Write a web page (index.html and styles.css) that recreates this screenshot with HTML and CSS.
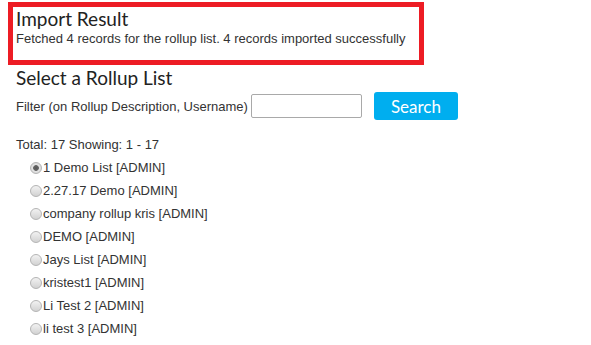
FILE: index.html
```html
<!DOCTYPE html>
<html lang="en">
<head>
    <meta charset="UTF-8">
    <meta name="viewport" content="width=device-width, initial-scale=1.0">
    <title>Select a Rollup List</title>
    <link rel="stylesheet" href="styles.css">
</head>
<body>
    <div class="page">
        <div class="result-box">
            <h2 class="title">Import Result</h2>
            <p class="message">Fetched 4 records for the rollup list. 4 records imported successfully</p>
        </div>

        <h2 class="title section-title">Select a Rollup List</h2>
        <form class="filter" onsubmit="return false;">
            <label for="filter">Filter (on Rollup Description, Username)</label>
            <input type="text" id="filter">
            <button type="submit" class="search-btn">Search</button>
        </form>

        <div class="total">Total: 17 Showing: 1 - 17</div>
        <div class="rollups">
            <label class="rollup"><input type="radio" name="rollup" checked>1 Demo List [ADMIN]</label>
            <label class="rollup"><input type="radio" name="rollup">2.27.17 Demo [ADMIN]</label>
            <label class="rollup"><input type="radio" name="rollup">company rollup kris [ADMIN]</label>
            <label class="rollup"><input type="radio" name="rollup">DEMO [ADMIN]</label>
            <label class="rollup"><input type="radio" name="rollup">Jays List [ADMIN]</label>
            <label class="rollup"><input type="radio" name="rollup">kristest1 [ADMIN]</label>
            <label class="rollup"><input type="radio" name="rollup">Li Test 2 [ADMIN]</label>
            <label class="rollup"><input type="radio" name="rollup">li test 3 [ADMIN]</label>
            <label class="rollup"><input type="radio" name="rollup">Lucy [ADMIN]</label>
        </div>
    </div>
</body>
</html>
```

FILE: styles.css
```css
body {
    font-family: "Liberation Sans", Arial, sans-serif;
    font-size: 13px;
    color: #333;
    background-color: #fff;
    margin: 0;
    padding: 0;
    overflow: hidden;
}

.page {
    padding: 2px 8px;
}

.result-box {
    width: 403px;
    height: 53px;
    border: 5px solid #ed1c24;
    padding: 0 0 0 3px;
    box-sizing: content-box;
}

.title {
    font-family: Lato, "Open Sans", sans-serif;
    font-weight: 400;
    font-size: 19px;
    color: #222;
    margin: 0;
    line-height: 24px;
}

.message {
    margin: 0;
    line-height: 15px;
}

.section-title {
    margin: 1px 0 0 8px;
}

.filter {
    display: flex;
    align-items: center;
    margin: 2px 0 0 8px;
}

.filter label {
    margin-right: 3px;
}

.filter input {
    width: 109px;
    height: 22px;
    border: 1px solid #a9a9a9;
    border-radius: 2px;
    padding: 0;
    margin: 0 12px 0 0;
}

.search-btn {
    background-color: #00aeef;
    color: #fff;
    border: none;
    border-radius: 3px;
    width: 84px;
    height: 28px;
    font-family: Lato, "Open Sans", sans-serif;
    font-size: 17px;
    cursor: pointer;
}

.total {
    margin: 18px 0 0 8px;
    line-height: 14px;
}

.rollups {
    margin: 4px 0 0 22px;
}

.rollup {
    display: flex;
    align-items: center;
    height: 23px;
}

.rollup input {
    appearance: none;
    -webkit-appearance: none;
    margin: 0 1px 0 0;
    width: 12px;
    height: 12px;
    border: 1px solid #b4b4b4;
    border-radius: 50%;
    background: linear-gradient(#f2f2f2, #d2d2d2);
    box-sizing: border-box;
}

.rollup input:checked {
    background: radial-gradient(circle, #555 0, #666 2.5px, #e4e4e4 3.2px, #cfcfcf 100%);
}
```
